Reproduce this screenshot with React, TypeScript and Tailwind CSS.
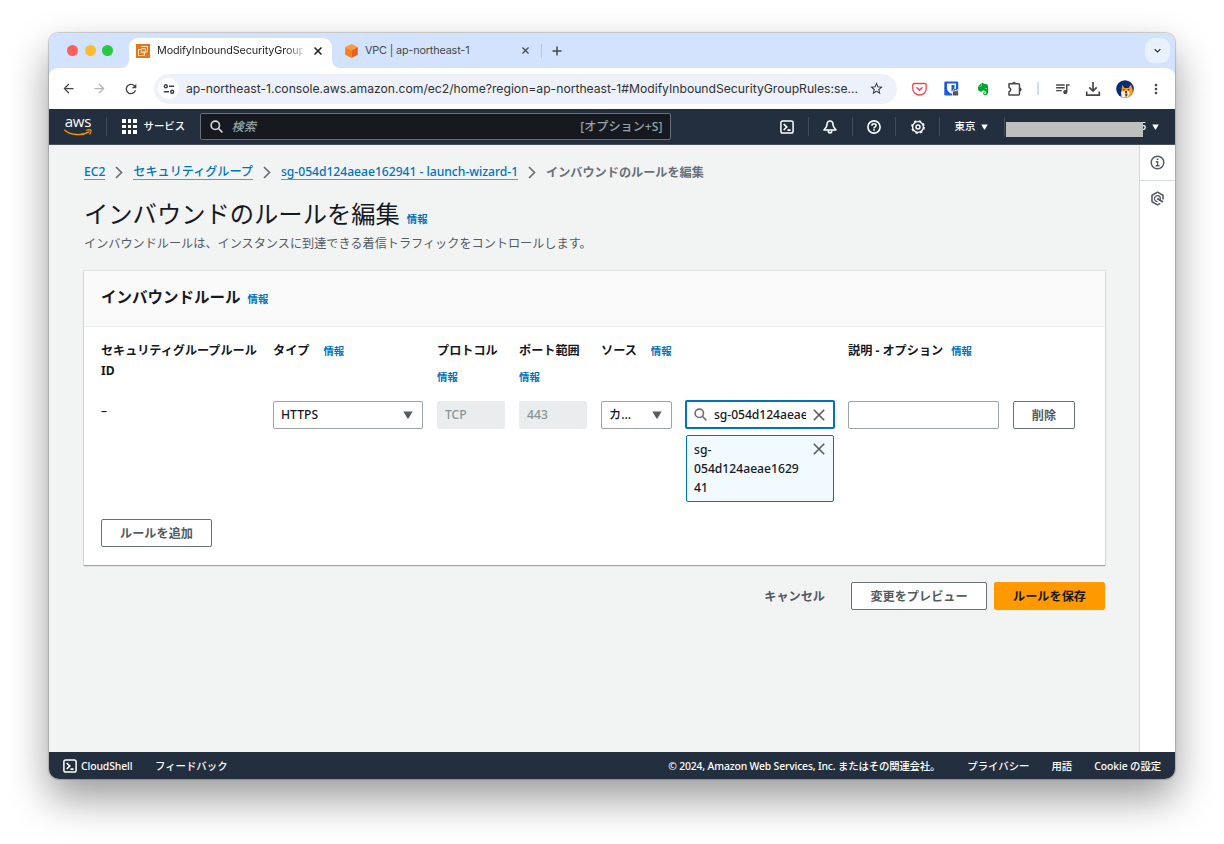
import type { ReactNode } from 'react';
import { clsx } from 'clsx';
import { FaEvernote } from 'react-icons/fa';
import {
  MdArrowBack,
  MdArrowForward,
  MdKeyboardArrowDown,
  MdMoreVert,
  MdQueueMusic,
  MdRefresh,
  MdStarBorder,
} from 'react-icons/md';

/* ---------- アイコン ---------- */

function AwsLogo() {
  return (
    <div className="flex w-[28px] flex-col items-center">
      <span className="h-[12px] font-['Open_Sans','Noto_Sans',sans-serif] text-[15px] leading-[9px] font-medium tracking-[-0.2px] text-white">
        aws
      </span>
      <svg className="h-[7px] w-[28px]" viewBox="0 0 28 7" fill="none">
        <path d="M.8 1.2C7 6.4 18 7 25 2.8" stroke="#ff9900" strokeWidth="1.4" strokeLinecap="round" />
        <path d="M22.4 1.2c2-.6 4-.6 4.4-.2s.1 2.4-1 4.200" stroke="#ff9900" strokeWidth="1.1" strokeLinecap="round" />
      </svg>
    </div>
  );
}

function Ec2Favicon() {
  return (
    <svg className="h-[14px] w-[14px] shrink-0" viewBox="0 0 14 14" fill="none">
      <rect width="14" height="14" fill="#e2761b" />
      <path d="M5.200 2.500h6.300v5.300h-5" stroke="#ffe3c2" strokeWidth="1" />
      <path d="M4.800 5.500H2.500v6h6V8.500" stroke="#ffe3c2" strokeWidth="1" />
      <rect x="5.200" y="4.500" width="4.300" height="4.300" rx="1" stroke="#ffe3c2" strokeWidth="1" transform="rotate(8 7 7)" />
    </svg>
  );
}

function VpcFavicon() {
  return (
    <svg className="h-[14px] w-[13px] shrink-0" viewBox="0 0 13 14">
      <path d="M6.500 0L12.800 3 6.500 6.200.2 3z" fill="#fb9a3c" />
      <path d="M.2 3l6.300 3.200V14L.2 10.800z" fill="#f5821f" />
      <path d="M12.800 3L6.500 6.200V14l6.300-3.200z" fill="#e8601c" />
    </svg>
  );
}

function SiteSettingsIcon() {
  return (
    <svg className="h-[12px] w-[12px]" viewBox="0 0 12 12" fill="none" stroke="#3c4043" strokeWidth="1.400">
      <circle cx="2.800" cy="3.300" r="1.500" />
      <path d="M6 3.300h5.200M.8 8.700H6" />
      <circle cx="9.200" cy="8.700" r="1.500" />
    </svg>
  );
}

function PocketIcon() {
  return (
    <svg className="h-[14px] w-[15px]" viewBox="0 0 15 14" fill="none" stroke="#ee4056" strokeLinecap="round" strokeLinejoin="round">
      <path d="M2 1.500h11a1.200 1.200 0 011.200 1.200V6.800a6.700 6.200 0 01-13.400 0V2.700A1.200 1.200 0 012 1.500z" strokeWidth="1.300" />
      <path d="M4.900 5.700l2.600 2.400 2.600-2.400" strokeWidth="1.500" />
    </svg>
  );
}

function BitwardenIcon() {
  return (
    <svg className="h-[15px] w-[15px]" viewBox="0 0 15 15">
      <rect x=".3" y=".5" width="14" height="14" rx="1.200" fill="#175ddc" />
      <path d="M3 2.500h9v5c0 2.500-2 4-4.500 5.300C5 11.500 3 10 3 7.500z" fill="#fff" />
      <path d="M7.500 4h3v3.500c0 1.200-1.200 2.200-3 3.200z" fill="#175ddc" />
      <path d="M8.300 15v-5l1.300-2h4l1.400 2v5z" fill="#fff" />
      <path d="M9.900 10.500V9.800a1.600 1.600 0 013.200 0v.7" fill="none" stroke="#555" strokeWidth="1.100" />
      <rect x="9" y="10.300" width="5.200" height="4.200" rx=".6" fill="#555" />
    </svg>
  );
}

function PuzzleIcon() {
  return (
    <svg className="h-[16px] w-[16px]" viewBox="0 0 16 16" fill="none" stroke="#474747" strokeWidth="1.500" strokeLinejoin="round">
      <path d="M2 2.800h9.500a1 1 0 011 1V13a1 1 0 01-1 1H2v-3.300a2.200 2.200 0 000-4.300z" />
      <path d="M5.500 2.500a1.500 1.300 0 013 0zM13 7a1.300 1.500 0 010 3z" fill="#474747" strokeWidth=".8" />
    </svg>
  );
}

function DownloadIcon() {
  return (
    <svg className="h-[16px] w-[16px]" viewBox="0 0 16 16" fill="none" stroke="currentColor" strokeWidth="1.700">
      <path d="M8 1v8.500M4.300 6.300L8 10l3.700-3.700M1.700 10.500v3.700h12.600v-3.700" />
    </svg>
  );
}

function DogAvatar() {
  return (
    <svg className="h-[18px] w-[18px]" viewBox="0 0 18 18">
      <defs>
        <clipPath id="avatar">
          <circle cx="9" cy="9" r="8.800" />
        </clipPath>
      </defs>
      <g clipPath="url(#avatar)">
        <rect width="18" height="18" fill="#062d74" />
        <path d="M6.300 5l2.200 3h4l2.500-3.500 1.500 4.500L18 18H5L5.500 10z" fill="#f59a22" />
        <path d="M5 12l3-1.500 2 .5 2.500-.5 1.300 2.500-2 4.500H6z" fill="#f8ead2" />
        <path d="M9 13.500h2.500l-.5 2.700-1.300.5z" fill="#7a2a1c" />
        <circle cx="8" cy="9.800" r=".7" fill="#26170c" />
        <circle cx="12.400" cy="9.800" r=".7" fill="#26170c" />
        <circle cx="10" cy="12" r="1" fill="#26170c" />
      </g>
    </svg>
  );
}

function CloudShellIcon({ className }: { className?: string }) {
  return (
    <svg className={clsx('h-[14px] w-[14px] shrink-0', className)} viewBox="0 0 14 14" fill="none" stroke="currentColor">
      <rect x=".9" y=".9" width="12.200" height="12.200" rx="1.800" strokeWidth="1.500" />
      <path d="M3.700 4l3 3-3 3M7.500 10.100h3" strokeWidth="1.700" />
    </svg>
  );
}

function BellIcon() {
  return (
    <svg className="h-[14px] w-[14px] shrink-0" viewBox="0 0 14 14" fill="none" stroke="currentColor" strokeWidth="1.600" strokeLinejoin="round">
      <path d="M7 1C4.800 1 4 3 4 4.800 4 7 2.500 8.300 1 10h12c-1.500-1.700-3-3-3-5.200C10 3 9.200 1 7 1z" />
      <path d="M5.200 10.500c0 1.400.8 2.400 1.800 2.400s1.800-1 1.800-2.400" />
    </svg>
  );
}

function HelpIcon() {
  return (
    <svg className="h-[14px] w-[14px] shrink-0" viewBox="0 0 14 14" fill="none" stroke="currentColor" strokeWidth="1.600">
      <circle cx="7" cy="7" r="6.100" />
      <path d="M4.900 5.700C4.900 4.400 5.800 3.700 7 3.700s2.100.7 2.100 1.800C9.100 6.800 7 6.900 7 8.400M7 9.300v1.500" />
    </svg>
  );
}

function GearIcon() {
  return (
    <svg className="h-[14px] w-[14px] shrink-0" viewBox="0 0 14 14" fill="none" stroke="currentColor">
      <circle cx="7" cy="7" r="6.300" strokeWidth="1.200" strokeDasharray="2.500 2.448" />
      <circle cx="7" cy="7" r="5.400" strokeWidth="1.400" />
      <circle cx="7" cy="7" r="2" strokeWidth="1.500" />
    </svg>
  );
}

function InfoIcon() {
  return (
    <svg className="h-[15px] w-[15px]" viewBox="0 0 15 15" fill="none" stroke="#545b64">
      <circle cx="7.500" cy="7.500" r="6.300" strokeWidth="1.500" />
      <path d="M5.800 6.700h1.800v3.800M5.500 10.700h4" strokeWidth="1.400" />
      <path d="M6.700 4.300h1.700" strokeWidth="1.600" />
    </svg>
  );
}

function HexagonIcon() {
  return (
    <svg className="h-[15px] w-[15px]" viewBox="0 0 15 15" fill="none" stroke="#545b64" strokeLinejoin="round">
      <path d="M13 8.500V4.200L7.500 1.100 2 4.200v6.600l5.500 3.100 2.800-1.500" strokeWidth="1.600" />
      <path d="M10.300 8.600A3 3 0 107.500 10.600" strokeWidth="1.200" />
      <path d="M7.300 7.300l5.500 3.700" strokeWidth="2" />
    </svg>
  );
}

function SearchIcon({ className }: { className?: string }) {
  return (
    <svg className={clsx('h-[13px] w-[13px] shrink-0', className)} viewBox="0 0 13 13" fill="none" stroke="currentColor" strokeWidth="1.600">
      <circle cx="5.300" cy="5.300" r="4.200" />
      <path d="M8.300 8.300l4.100 4.100" />
    </svg>
  );
}

function CloseIcon({ className }: { className?: string }) {
  return (
    <svg className={clsx('shrink-0', className)} viewBox="0 0 12 12" fill="none" stroke="currentColor">
      <path d="M.8.8l10.400 10.400M11.200.8L.8 11.200" />
    </svg>
  );
}

function Caret({ className }: { className?: string }) {
  return (
    <svg className={clsx('shrink-0', className)} viewBox="0 0 10 8" fill="currentColor">
      <path d="M.4.500h9.200L5.500 7.600h-1z" />
    </svg>
  );
}

/* ---------- ブラウザ ---------- */

function TabStrip() {
  return (
    <div className="flex h-[35px] items-end bg-[#d3e3fd]">
      <div className="flex h-[35px] w-[72px] items-center gap-[6.500px] pl-[18px]">
        <span className="h-[11px] w-[11px] rounded-full bg-[#ff5f57]" />
        <span className="h-[11px] w-[11px] rounded-full bg-[#febc2e]" />
        <span className="h-[11px] w-[11px] rounded-full bg-[#28c840]" />
      </div>
      <svg className="h-2 w-2" viewBox="0 0 8 8" fill="#fff">
        <path d="M8 0v8H0a8 8 0 008-8z" />
      </svg>
      <div className="flex h-[30px] w-[203px] items-center rounded-t-[9px] bg-white pr-[9px] pb-[5px] pl-[7px]">
        <Ec2Favicon />
        <span className="ml-[7px] w-[146px] bg-gradient-to-r from-[#1f1f1f] from-88% to-[#1f1f1f]/20 bg-clip-text text-[10.800px] leading-4 tracking-[-0.120px] whitespace-nowrap text-transparent">
          ModifyInboundSecurityGroup
        </span>
        <CloseIcon className="ml-[11px] h-[8px] w-[8px] stroke-[2.300] text-[#1f1f1f]" />
      </div>
      <svg className="h-2 w-2" viewBox="0 0 8 8" fill="#fff">
        <path d="M0 0v8h8a8 8 0 01-8-8z" />
      </svg>
      <div className="flex h-[35px] flex-1 items-center pl-[5px] text-[#474747]">
        <VpcFavicon />
        <span className="ml-[7px] w-[157px] text-[10.800px] leading-4 tracking-[-0.150px] whitespace-nowrap">VPC | ap-northeast-1</span>
        <CloseIcon className="h-[7px] w-[7px] stroke-[2.200]" />
        <span className="ml-[12px] h-[14px] w-px bg-[#a8c7fa]" />
        <svg className="ml-[10px] h-[10px] w-[10px]" viewBox="0 0 10 10" stroke="currentColor" strokeWidth="1.500">
          <path d="M5 .5v9M.5 5h9" />
        </svg>
        <span className="mr-[5px] ml-auto flex h-[25px] w-[25px] items-center justify-center rounded-[9px] bg-[#e9f0fe] text-[#1f1f1f]">
          <MdKeyboardArrowDown className="h-[13px] w-[13px]" />
        </span>
      </div>
    </div>
  );
}

function Toolbar() {
  return (
    <div className="bg-[#d3e3fd]">
      <div className="flex h-[41px] items-center rounded-t-[9px] bg-white text-[#474747]">
        <MdArrowBack className="ml-[12px] h-[15px] w-[15px]" />
        <MdArrowForward className="ml-[16px] h-[15px] w-[15px] text-[#b0b3b7]" />
        <MdRefresh className="ml-[16px] h-[16px] w-[16px]" />
        <div className="ml-[15px] flex h-[30px] w-[743px] items-center rounded-full bg-[#ecf1fa] pr-[13px] pl-[4px]">
          <span className="flex h-[21px] w-[21px] items-center justify-center rounded-full bg-white">
            <SiteSettingsIcon />
          </span>
          <span className="ml-[7px] flex-1 text-[12.200px] leading-5 tracking-[-0.020px] whitespace-nowrap text-[#303134]">
            ap-northeast-1.console.aws.amazon.com/ec2/home?region=ap-northeast-1#ModifyInboundSecurityGroupRules:se...
          </span>
          <MdStarBorder className="h-[15px] w-[15px] shrink-0 text-[#303134]" />
        </div>
        <div className="ml-[15px] flex items-center gap-[17px]">
          <PocketIcon />
          <BitwardenIcon />
          <FaEvernote className="h-[14px] w-[14px] text-[#00a82d]" />
          <PuzzleIcon />
        </div>
        <span className="ml-[14px] h-[13px] w-[1.500px] bg-[#c9dcfb]" />
        <div className="ml-[15px] flex items-center gap-[14.500px]">
          <MdQueueMusic className="h-[17px] w-[17px]" />
          <DownloadIcon />
          <DogAvatar />
          <MdMoreVert className="h-[16px] w-[16px]" />
        </div>
      </div>
    </div>
  );
}

/* ---------- AWS コンソール ---------- */

function NavDivider({ className }: { className?: string }) {
  return <span className={clsx('h-[19px] w-px shrink-0 bg-[#414d5c]', className)} />;
}

function ConsoleNav() {
  return (
    <div className="flex h-[36px] items-center border-b border-[#47525d] bg-[#232f3e] pl-[15px] text-[11px] font-medium text-white">
      <AwsLogo />
      <NavDivider className="ml-[14px]" />
      <div className="ml-[15px] grid grid-cols-3 gap-[2px]">
        {Array.from({ length: 9 }, (_, i) => (
          <span key={i} className="h-[3.500px] w-[3.500px] bg-white" />
        ))}
      </div>
      <span className="ml-[7px] w-[56px] text-[10.400px]">サービス</span>
      <div className="flex h-[27px] w-[471px] shrink-0 items-center rounded-[2px] border border-[#687078] bg-[#16191f] pr-[7px] pl-[9px]">
        <SearchIcon className="text-[#d5dbdb]" />
        <span className="ml-[9px] pt-px text-[12.150px] text-[#95a5a6] italic">検索</span>
        <span className="ml-auto pt-px text-[12.150px] text-[#95a5a6]">[オプション+S]</span>
      </div>
      <CloudShellIcon className="ml-[109px]" />
      <NavDivider className="mr-[14px] ml-[14px]" />
      <BellIcon />
      <NavDivider className="mr-[14px] ml-[15px]" />
      <HelpIcon />
      <NavDivider className="mr-[15px] ml-[14px]" />
      <GearIcon />
      <NavDivider className="mr-[15px] ml-[14px]" />
      <span className="text-[10.400px]">東京</span>
      <Caret className="ml-[6px] h-[6px] w-[7px]" />
      <NavDivider className="ml-[16px]" />
      {/* アカウント名はマスクで覆い、末尾だけが見える */}
      <span className="relative z-10 mt-[5px] ml-[1px] h-[15px] w-[137px] shrink-0 bg-[#bfbfbf]" />
      <span className="ml-[-3px] shrink-0 text-[10.400px]">5</span>
      <Caret className="ml-[6px] h-[6px] w-[7px]" />
    </div>
  );
}

function Info({ className }: { className?: string }) {
  return <a className={clsx('text-[10.400px] font-bold text-[#0073bb]', className)}>情報</a>;
}

function Chevron() {
  return (
    <svg className="h-[13px] w-[8px]" viewBox="0 0 8 13" fill="none" stroke="#687078" strokeWidth="1.700">
      <path d="M1 1l5.500 5.500L1 12" />
    </svg>
  );
}

function Crumb({ children }: { children: ReactNode }) {
  return <a className="border-b border-[#4d9dce] tracking-[-0.030px] text-[#0073bb]">{children}</a>;
}

function Button({ children, className }: { children: ReactNode; className?: string }) {
  return (
    <button
      className={clsx(
        'flex h-[28px] items-center justify-center rounded-[2px] border pt-[2px] text-[12.150px] font-bold whitespace-nowrap',
        className,
      )}
    >
      {children}
    </button>
  );
}

const OUTLINE = 'border-[#687078] bg-white text-[#545b64]';

function Select({ value }: { value: string }) {
  return (
    <div className="flex h-[28px] items-center justify-between rounded-[2px] border border-[#9aa3aa] bg-white pr-[9px] pl-[7px]">
      {value}
      <Caret className="h-[8px] w-[10px] text-[#545b64]" />
    </div>
  );
}

function Disabled({ value }: { value: string }) {
  return <div className="flex h-[28px] items-center rounded-[2px] bg-[#eaeded] pl-[8px] text-[#879596]">{value}</div>;
}

const COLUMNS = 'grid grid-cols-[158px_150px_68px_68px_71px_148px_151px_62px] gap-x-[14px]';

function RulesCard() {
  return (
    <section className="mt-[17px] h-[294px] w-[1021px] bg-white shadow-[0_1px_1px_0_rgba(0,28,36,.3),0_0_1px_1px_rgba(0,28,36,.07)]">
      <div className="flex h-[56px] items-center border-b border-[#eaeded] bg-[#fafafa] px-[17px] pb-[1px]">
        <h2 className="text-[15.500px] font-bold">インバウンドルール</h2>
        <Info className="mt-[3px] ml-[7px]" />
      </div>
      <div className="px-[17px] pt-[14px]">
        <div className={clsx(COLUMNS, 'h-[60px] leading-5 font-bold')}>
          <div className="tracking-[-0.050px]">
            セキュリティグループルール
            <br />
            ID
          </div>
          <div className="whitespace-nowrap">
            タイプ
            <Info className="ml-[14px]" />
          </div>
          <div className="whitespace-nowrap">
            プロトコル
            <Info className="mt-[6px] block" />
          </div>
          <div className="whitespace-nowrap">
            ポート範囲
            <Info className="mt-[6px] block" />
          </div>
          <div className="whitespace-nowrap">
            ソース
            <Info className="ml-[14px]" />
          </div>
          <div />
          <div className="whitespace-nowrap">
            説明 - オプション
            <Info className="ml-[8px]" />
          </div>
        </div>
        <div className={clsx(COLUMNS, 'items-start font-medium')}>
          <div className="leading-5">–</div>
          <Select value="HTTPS" />
          <Disabled value="TCP" />
          <Disabled value="443" />
          <Select value="カ..." />
          <div className="-mt-px">
            <div className="-ml-px flex h-[29px] w-[150px] items-center rounded-[2px] border-2 border-[#0073bb] bg-white px-[7px]">
              <SearchIcon className="text-[#687078]" />
              <span className="ml-[7px] w-[92px] overflow-hidden pt-px tracking-[-0.050px] whitespace-nowrap">
                sg-054d124aeae162941
              </span>
              <CloseIcon className="ml-[7px] h-[12px] w-[12px] stroke-[1.600] text-[#545b64]" />
            </div>
            <div className="mt-[6px] flex h-[67px] justify-between rounded-[2px] border border-[#0073bb] bg-[#f1faff] py-[4px] pr-[8px] pl-[7px]">
              <span className="w-[112px] leading-[19px]">
                sg-
                <br />
                054d124aeae1629
                <br />
                41
              </span>
              <CloseIcon className="mt-[3px] h-[12px] w-[12px] stroke-[1.600] text-[#545b64]" />
            </div>
          </div>
          <div className="h-[28px] rounded-[2px] border border-[#9aa3aa] bg-white" />
          <Button className={OUTLINE}>削除</Button>
        </div>
        <Button className={clsx(OUTLINE, 'mt-[17px] w-[111px]')}>ルールを追加</Button>
      </div>
    </section>
  );
}

function Footer() {
  return (
    <div className="flex h-[27px] items-center bg-[#232f3e] px-[14px] pt-px text-[10.400px] font-medium whitespace-nowrap text-white">
      <CloudShellIcon className="mb-px" />
      <span className="mt-px ml-[4px] w-[74px] tracking-[-0.100px]">CloudShell</span>
      <span className="mt-px">フィードバック</span>
      <span className="mt-px ml-auto tracking-[-0.160px]">© 2024, Amazon Web Services, Inc. またはその関連会社。</span>
      <span className="mt-px ml-[27px]">プライバシー</span>
      <span className="mt-px ml-[22px]">用語</span>
      <span className="mt-px ml-[22px] tracking-[-0.100px]">Cookie の設定</span>
    </div>
  );
}

export default function App() {
  return (
    <div className="h-[844px] w-[1224px] overflow-hidden bg-white pt-[33px] pl-[49px]">
      <div className="w-[1126px] rounded-[10px] shadow-[0_0_1px_1px_rgba(0,0,0,.18),0_19px_40px_rgba(0,0,0,.4)]">
        <div className="h-[746px] overflow-hidden rounded-[10px] font-['Inter','Noto_Sans_CJK_JP',sans-serif]">
          <TabStrip />
          <Toolbar />
          <div className="font-['Noto_Sans','Noto_Sans_CJK_JP',sans-serif] text-[12.150px] text-[#16191f]">
            <ConsoleNav />
            <div className="flex h-[607px] bg-[#f2f3f3]">
              <main className="flex-1 pt-[17px] pl-[35px]">
                <nav className="flex h-5 items-center gap-[10px] leading-[15px] font-medium">
                  <Crumb>EC2</Crumb>
                  <Chevron />
                  <Crumb>セキュリティグループ</Crumb>
                  <Chevron />
                  <Crumb>sg-054d124aeae162941 - launch-wizard-1</Crumb>
                  <Chevron />
                  <span className="font-bold text-[#687078]">インバウンドのルールを編集</span>
                </nav>
                <div className="mt-[16px] flex h-8 items-center">
                  <h1 className="text-[24.300px] leading-8">インバウンドのルールを編集</h1>
                  <Info className="mt-[11px] ml-[7px]" />
                </div>
                <p className="mt-[4px] leading-5 text-[#545b64]">
                  インバウンドルールは、インスタンスに到達できる着信トラフィックをコントロールします。
                </p>
                <RulesCard />
                <div className="mt-[17px] flex w-[1021px] justify-end">
                  <Button className="mr-[25px] border-transparent text-[#545b64]">キャンセル</Button>
                  <Button className={clsx(OUTLINE, 'mr-[7px] w-[136px]')}>変更をプレビュー</Button>
                  <Button className="w-[111px] border-[#ff9900] bg-[#ff9900] text-[#16191f]">ルールを保存</Button>
                </div>
              </main>
              <aside className="flex w-[36px] flex-col border-l border-[#d5dbdb] bg-white">
                <div className="flex h-[36px] items-center justify-center border-b border-[#d5dbdb]">
                  <InfoIcon />
                </div>
                <div className="flex h-[35px] items-center justify-center">
                  <HexagonIcon />
                </div>
              </aside>
            </div>
            <Footer />
          </div>
        </div>
      </div>
    </div>
  );
}
